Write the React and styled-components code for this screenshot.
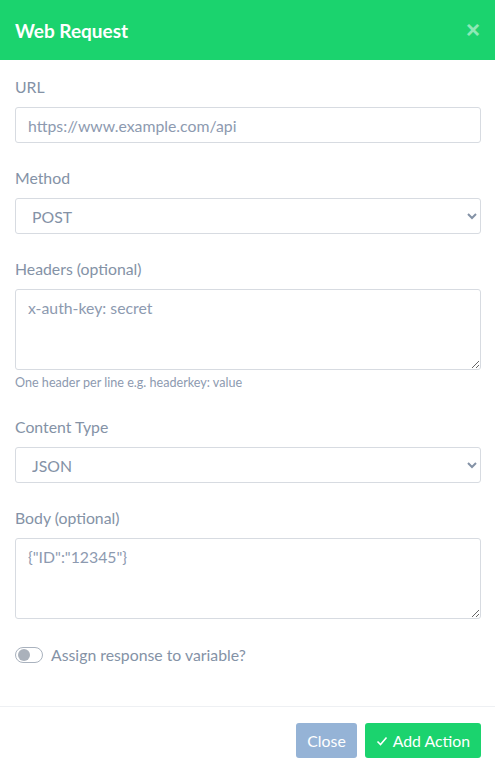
import React from "react";
import styled, { createGlobalStyle } from "styled-components";

const Global = createGlobalStyle`
  html, body { margin: 0; padding: 0; background: #fff; }
  body { font-family: "Lato", "Noto Sans", sans-serif; }
  * { box-sizing: border-box; }
`;

const Modal = styled.div`
  width: 495px;
  height: 773px;
  background: #fff;
  display: flex;
  flex-direction: column;
`;

const Header = styled.div`
  height: 60px;
  background: #1bd36e;
  display: flex;
  align-items: center;
  justify-content: space-between;
  padding: 0 15px;
`;

const Title = styled.h5`
  margin: 0;
  color: #fff;
  font-size: 19px;
  font-weight: 700;
`;

const CloseX = styled.button`
  border: 0;
  background: transparent;
  color: #fff;
  opacity: 0.5;
  font-size: 24px;
  font-weight: 700;
  line-height: 1;
  padding: 0;
  cursor: pointer;
  font-family: "Liberation Sans", sans-serif;
`;

const Body = styled.div`
  flex: 1;
  padding: 16px 14px 0 15px;
`;

const Group = styled.div`
  margin-bottom: ${(p) => (p.$last ? "0" : "24px")};
`;

const Label = styled.label`
  display: block;
  color: #8492a6;
  font-size: 15.8px;
  line-height: 22px;
  margin-bottom: 9px;
`;

const fieldCss = `
  width: 100%;
  border: 1px solid #d7dbe1;
  border-radius: 3px;
  color: #8492a6;
  font-family: "Lato", "Noto Sans", sans-serif;
  font-size: 15.8px;
  background: #fff;
  outline: none;
`;

const Input = styled.input`
  ${fieldCss}
  height: 36px;
  padding: 0 12px;
  &::placeholder { color: #8d9ab0; }
`;

const Select = styled.select`
  ${fieldCss}
  height: 36px;
  padding: 0 8px 0 12px;
`;

const TextArea = styled.textarea`
  ${fieldCss}
  display: block;
  height: 81px;
  padding: 8px 12px;
  resize: vertical;
  &::placeholder { color: #8d9ab0; }
`;

const Help = styled.small`
  display: block;
  margin-top: 4px;
  font-size: 12.6px;
  line-height: 18px;
  color: #8d9ab0;
`;

const SwitchRow = styled.label`
  display: flex;
  align-items: center;
  gap: 8px;
  color: #8492a6;
  font-size: 15.8px;
  line-height: 22px;
  margin-top: 25px;
`;

const Track = styled.span`
  width: 28px;
  height: 16px;
  border: 1px solid #a9b2be;
  border-radius: 8px;
  display: flex;
  align-items: center;
  padding-left: 2px;
  background: #fff;
`;

const Knob = styled.span`
  width: 12px;
  height: 12px;
  border-radius: 50%;
  background: #aab1bb;
`;

const Footer = styled.div`
  border-top: 1px solid #eef0f3;
  padding: 16px 14px 15px;
  display: flex;
  justify-content: flex-end;
  gap: 8px;
`;

const Button = styled.button`
  height: 35px;
  border: 0;
  border-radius: 3px;
  padding: 0 11px;
  color: #fff;
  font-family: "Lato", "Noto Sans", sans-serif;
  font-size: 15.8px;
  display: flex;
  align-items: center;
  gap: 5px;
  background: ${(p) => (p.$variant === "primary" ? "#1bd36e" : "#95b3d6")};
`;

export default function App() {
  return (
    <>
      <Global />
      <Modal>
        <Header>
          <Title>Web Request</Title>
          <CloseX aria-label="Close">×</CloseX>
        </Header>
        <Body>
          <Group>
            <Label>URL</Label>
            <Input placeholder="https://www.example.com/api" />
          </Group>
          <Group>
            <Label>Method</Label>
            <Select defaultValue="POST">
              <option>GET</option>
              <option>POST</option>
            </Select>
          </Group>
          <Group>
            <Label>Headers (optional)</Label>
            <TextArea placeholder="x-auth-key: secret" />
            <Help>One header per line e.g. headerkey: value</Help>
          </Group>
          <Group>
            <Label>Content Type</Label>
            <Select defaultValue="JSON">
              <option>JSON</option>
              <option>Form</option>
            </Select>
          </Group>
          <Group $last>
            <Label>Body (optional)</Label>
            <TextArea placeholder='{"ID":"12345"}' />
          </Group>
          <SwitchRow>
            <Track>
              <Knob />
            </Track>
            Assign response to variable?
          </SwitchRow>
        </Body>
        <Footer>
          <Button>Close</Button>
          <Button $variant="primary">
            <svg width="12" height="12" viewBox="0 0 12 12" fill="none">
              <path d="M1.5 6.5 L4.5 9.5 L10.5 2.5" stroke="#fff" strokeWidth="1.6" />
            </svg>
            Add Action
          </Button>
        </Footer>
      </Modal>
    </>
  );
}
